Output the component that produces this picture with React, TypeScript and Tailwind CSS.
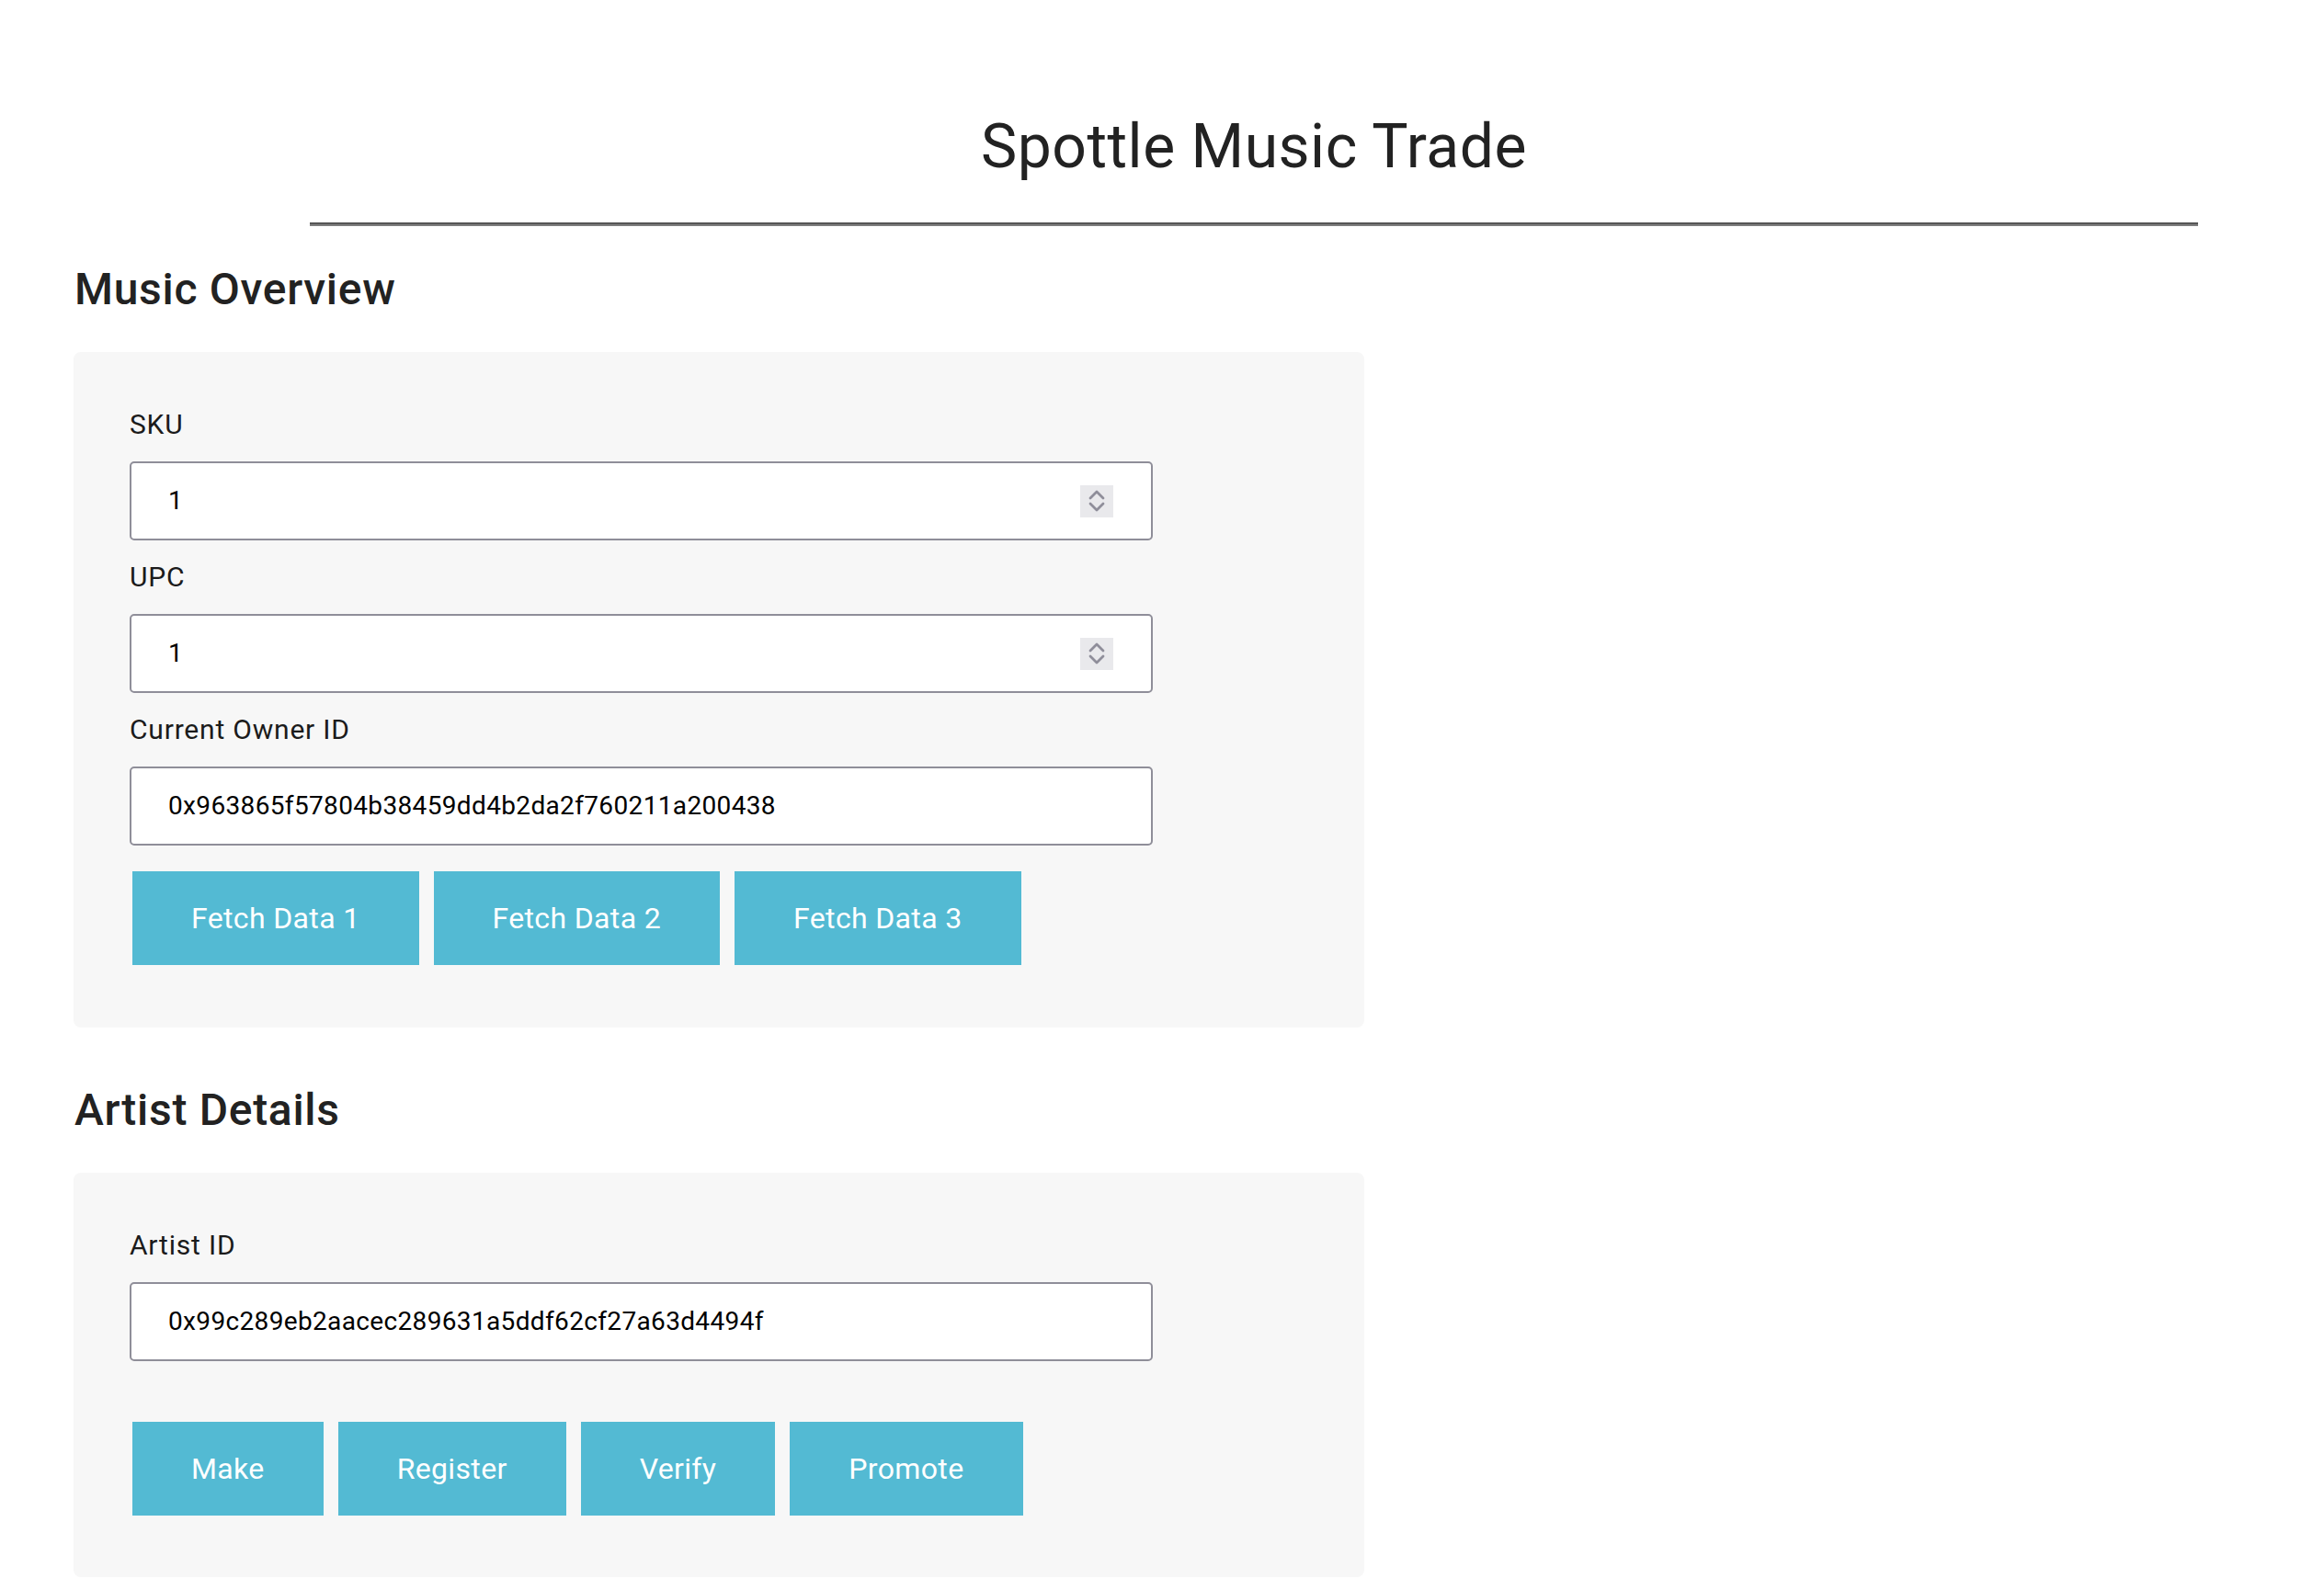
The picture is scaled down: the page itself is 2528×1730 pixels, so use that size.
import React from 'react';

interface FieldProps {
  label: string;
  value: string;
  spinner?: boolean;
  last?: boolean;
}

const Spinner = () => (
  <span className="flex h-[35px] w-[36px] items-center justify-center bg-[#e9e9ec]">
    <svg width="18" height="28" viewBox="0 0 18 28" fill="none" stroke="#8f8e9a" strokeWidth="2.8" strokeLinecap="round" strokeLinejoin="round">
      <path d="M2 11 L9 4 L16 11" />
      <path d="M2 17 L9 24 L16 17" />
    </svg>
  </span>
);

const Field: React.FC<FieldProps> = ({ label, value, spinner, last }) => (
  <div className={last ? '' : 'mb-[22px]'}>
    <label className="mb-[22px] block text-[30px] leading-[36px] tracking-[0.8px] text-[#1b1b1b]">{label}</label>
    <div className="flex h-[86px] w-[1113px] items-center rounded-[5px] border-2 border-[#8f8e99] bg-white pl-[40px] pr-[41px]">
      <input
        className="flex-1 bg-transparent text-[28px] tracking-[0.35px] text-black outline-none"
        defaultValue={value}
        readOnly
      />
      {spinner && <Spinner />}
    </div>
  </div>
);

const Btn = ({ children }: { children: React.ReactNode }) => (
  <button className="flex h-[102px] items-center bg-[#53bad3] px-[64px] text-[32px] tracking-[0.35px] text-white">
    {children}
  </button>
);

export default function App() {
  return (
    <div className="min-h-screen bg-white pb-[14px] font-['Roboto',sans-serif] text-[#222]">
      {/* Title */}
      <header className="ml-[337px] w-[2054px] pt-[121px]">
        <h1 className="text-center text-[66px] leading-[78px] font-normal tracking-[0.5px] text-[#222]">Spottle Music Trade</h1>
        <div className="mt-[43px] h-[4px] border-t-2 border-b-2 border-t-[#555555] border-b-[#7d7d7d]" />
      </header>

      <main className="pl-[80px]">
        {/* Music Overview */}
        <h2 className="ml-[1px] mt-[41px] mb-[40px] text-[48px] leading-[56px] font-medium tracking-[0.7px] text-[#222]">Music Overview</h2>
        <section className="w-[1404px] rounded-[8px] bg-[#f7f7f7] pt-[61px] pb-[68px] pl-[61px]">
          <Field label="SKU" value="1" spinner />
          <Field label="UPC" value="1" spinner />
          <Field label="Current Owner ID" value="0x963865f57804b38459dd4b2da2f760211a200438" last />
          <div className="ml-[3px] mt-[28px] flex gap-[16px]">
            <Btn>Fetch Data 1</Btn>
            <Btn>Fetch Data 2</Btn>
            <Btn>Fetch Data 3</Btn>
          </div>
        </section>

        {/* Artist Details */}
        <h2 className="ml-[1px] mt-[62px] mb-[40px] text-[48px] leading-[56px] font-medium tracking-[0.7px] text-[#222]">Artist Details</h2>
        <section className="w-[1404px] rounded-[8px] bg-[#f7f7f7] pt-[61px] pb-[67px] pl-[61px]">
          <Field label="Artist ID" value="0x99c289eb2aacec289631a5ddf62cf27a63d4494f" last />
          <div className="ml-[3px] mt-[66px] flex gap-[16px]">
            <Btn>Make</Btn>
            <Btn>Register</Btn>
            <Btn>Verify</Btn>
            <Btn>Promote</Btn>
          </div>
        </section>
      </main>
    </div>
  );
}
